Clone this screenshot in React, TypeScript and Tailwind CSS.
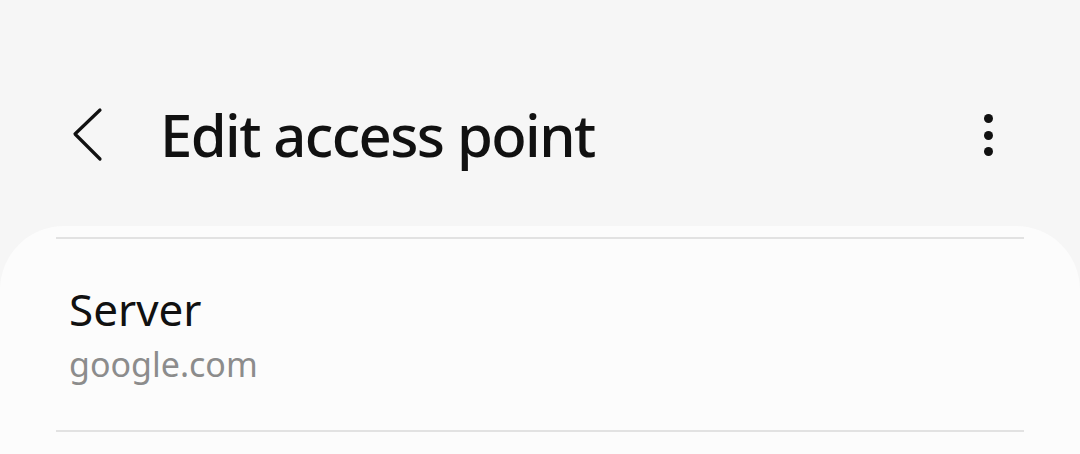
export default function App() {
  return (
    <div
      className="h-[454px] w-[1080px] overflow-hidden bg-[#f6f6f6]"
      style={{ fontFamily: '"Noto Sans", "Open Sans", sans-serif' }}
    >
      <header className="flex h-[226px] items-start pt-[90px]">
        <div className="flex h-[90px] w-full items-center">
          <div className="flex w-[160px] items-center pl-[58px]">
            <svg width="56" height="56" viewBox="0 0 56 56" fill="none">
              <path
                d="M42 3 L17 27 L42 52"
                stroke="#111"
                strokeWidth="3.2"
                strokeLinecap="round"
                strokeLinejoin="round"
              />
            </svg>
          </div>
          <h1 className="flex-1 text-[58px] font-medium leading-none tracking-[-1.6px] text-[#111]">
            Edit access point
          </h1>
          <div className="mr-[87px] flex w-[10px] flex-col items-center gap-[7.5px]">
            <span className="h-[9px] w-[9px] rounded-full bg-[#111]" />
            <span className="h-[9px] w-[9px] rounded-full bg-[#111]" />
            <span className="h-[9px] w-[9px] rounded-full bg-[#111]" />
          </div>
        </div>
      </header>
      <section className="h-[260px] rounded-t-[64px] bg-[#fcfcfc] px-[56px] pt-[11px]">
        <div className="h-[2px] bg-[#e2e2e2]" />
        <div className="flex h-[191px] flex-col justify-center pl-[13px]">
          <div className="text-[44px] leading-[58px] text-[#111]">Server</div>
          <div className="text-[34px] leading-[52px] text-[#8c8c8c]">google.com</div>
        </div>
        <div className="h-[2px] bg-[#e2e2e2]" />
      </section>
    </div>
  );
}
